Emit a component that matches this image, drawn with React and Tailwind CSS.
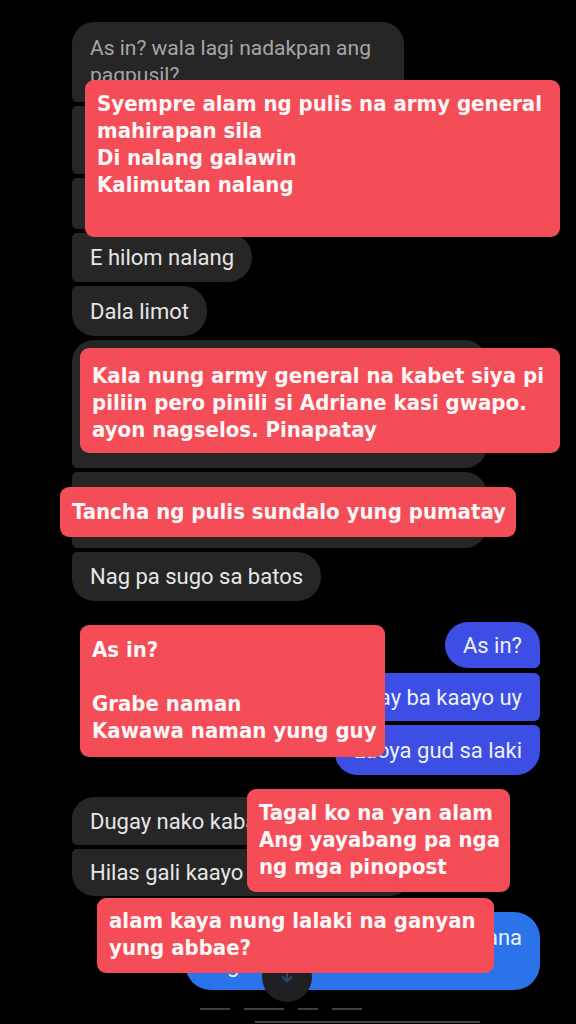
// App.jsx
const chatFont = { fontFamily: 'Roboto, "Liberation Sans", sans-serif' };

function Bubble({ children, className = "", tone = "text-[#e6e6e6] text-[22px]" }) {
  return (
    <div className={`flex items-center bg-[#262626] leading-[27px] px-[18px] ${tone} ${className}`}>
      <span>{children}</span>
    </div>
  );
}

function Sent({ children, className = "" }) {
  return (
    <div
      className={`flex items-center self-end whitespace-nowrap bg-[#3c4ee3] text-[#eef0ff] text-[22px] leading-[27px] px-[18px] ${className}`}
    >
      <span>{children}</span>
    </div>
  );
}

function Note({ className = "", lines }) {
  return (
    <div
      className={`absolute bg-[#f54d57] text-[#fdf7f7] rounded-[9px] text-[22px] leading-[27px] font-bold px-[12px] ${className}`}
      style={{ fontFamily: '"DejaVu Sans Condensed", "DejaVu Sans", sans-serif' }}
    >
      {lines.map((l, i) => (
        <div key={i} className="whitespace-nowrap h-[27px]">
          {l}
        </div>
      ))}
    </div>
  );
}

export default function App() {
  return (
    <div className="relative w-full h-[1024px] bg-black overflow-hidden" style={chatFont}>
      {/* chat thread */}
      <div className="flex flex-col gap-[4px] pt-[22px] pl-[72px] pr-[36px]">
        <Bubble
          tone="text-[#a6a6a6] text-[21px]"
          className="w-[332px] h-[80px] rounded-t-[22px] rounded-br-[22px] rounded-bl-[5px]"
        >
          As in? wala lagi nadakpan ang pagpusil?
        </Bubble>
        <Bubble className="w-[300px] h-[68px] rounded-r-[22px] rounded-l-[5px]">
          Kabalo man ang pulis army general
        </Bubble>
        <Bubble className="w-[250px] h-[51px] rounded-r-[22px] rounded-l-[5px]">
          Dili nalang hilabtan
        </Bubble>
        <Bubble className="self-start h-[49px] rounded-r-[24px] rounded-l-[5px]">E hilom nalang</Bubble>
        <Bubble className="self-start h-[50px] rounded-r-[24px] rounded-tl-[5px] rounded-bl-[22px]">Dala limot</Bubble>
        <Bubble className="w-[415px] h-[128px] rounded-t-[22px] rounded-br-[22px] rounded-bl-[5px]">
          Kala sa army general nga kabet siya pilion pero gipili si Adriane kay gwapo. Nag selos. Gipapatay
        </Bubble>
        <Bubble className="w-[415px] h-[76px] rounded-r-[22px] rounded-l-[5px]">
          Tuo sa pulis sundalo ang nagpatay niya
        </Bubble>
        <Bubble className="self-start h-[49px] rounded-r-[24px] rounded-tl-[5px] rounded-bl-[22px]">
          Nag pa sugo sa batos
        </Bubble>

        <Sent className="mt-[17px] h-[46px] rounded-l-[24px] rounded-tr-[24px] rounded-br-[6px]">As in?</Sent>
        <Sent className="mt-[1px] h-[48px] rounded-l-[22px] rounded-r-[6px]">Grabe ay ba kaayo uy</Sent>
        <Sent className="h-[50px] rounded-l-[22px] rounded-tr-[6px] rounded-br-[24px]">Luoya gud sa laki</Sent>

        <Bubble className="mt-[18px] w-[340px] h-[48px] rounded-t-[22px] rounded-br-[22px] rounded-bl-[5px]">
          Dugay nako kabalo ana
        </Bubble>
        <Bubble className="w-[340px] h-[47px] rounded-r-[22px] rounded-tl-[5px] rounded-bl-[22px]">
          Hilas gali kaayo siya
        </Bubble>

        <div className="relative mt-[12px] self-end w-[355px] h-[78px] rounded-[26px] bg-[#2a73e8] text-[#e8f1ff] text-[22px] leading-[27px] px-[18px] pt-[12px] text-right">
          <div>kabalo kaha ang laki nga ingana</div>
          <div className="text-left">ang babae?</div>
        </div>
      </div>

      {/* scroll-down button */}
      <div className="absolute left-[262px] top-[952px] w-[50px] h-[50px] rounded-full bg-[#1f2023] flex items-center justify-center">
        <svg width="18" height="18" viewBox="0 0 24 24" fill="none" stroke="#2f4466" strokeWidth="3" strokeLinecap="round" strokeLinejoin="round">
          <path d="M12 5v13M6 12l6 6 6-6" />
        </svg>
      </div>

      {/* faint bottom line */}
      <div className="absolute left-[200px] top-[1008px] w-[300px] h-[2px] flex gap-[14px] opacity-25">
        <div className="w-[30px] bg-white" />
        <div className="w-[40px] bg-white" />
        <div className="w-[20px] bg-white" />
        <div className="w-[30px] bg-white" />
      </div>
      <div className="absolute left-[255px] top-[1021px] w-[225px] h-[2px] bg-[#444]" />

      {/* red overlay notes */}
      <Note
        className="left-[85px] top-[80px] w-[475px] h-[157px] pt-[10px]"
        lines={["Syempre alam ng pulis na army general", "mahirapan sila", "Di nalang galawin", "Kalimutan nalang"]}
      />
      <Note
        className="left-[80px] top-[348px] w-[480px] h-[105px] pt-[14px]"
        lines={[
          "Kala nung army general na kabet siya pi",
          "piliin pero pinili si Adriane kasi gwapo.",
          "ayon nagselos. Pinapatay",
        ]}
      />
      <Note
        className="left-[60px] top-[487px] w-[456px] h-[50px] pt-[11px]"
        lines={["Tancha ng pulis sundalo yung pumatay"]}
      />
      <Note
        className="left-[80px] top-[625px] w-[305px] h-[132px] pt-[11px]"
        lines={["As in?", "", "Grabe naman", "Kawawa naman yung guy"]}
      />
      <Note
        className="left-[247px] top-[789px] w-[263px] h-[103px] pt-[10px]"
        lines={["Tagal ko na yan alam", "Ang yayabang pa nga", "ng mga pinopost"]}
      />
      <Note
        className="left-[97px] top-[898px] w-[397px] h-[75px] pt-[9px]"
        lines={["alam kaya nung lalaki na ganyan", "yung abbae?"]}
      />
    </div>
  );
}
